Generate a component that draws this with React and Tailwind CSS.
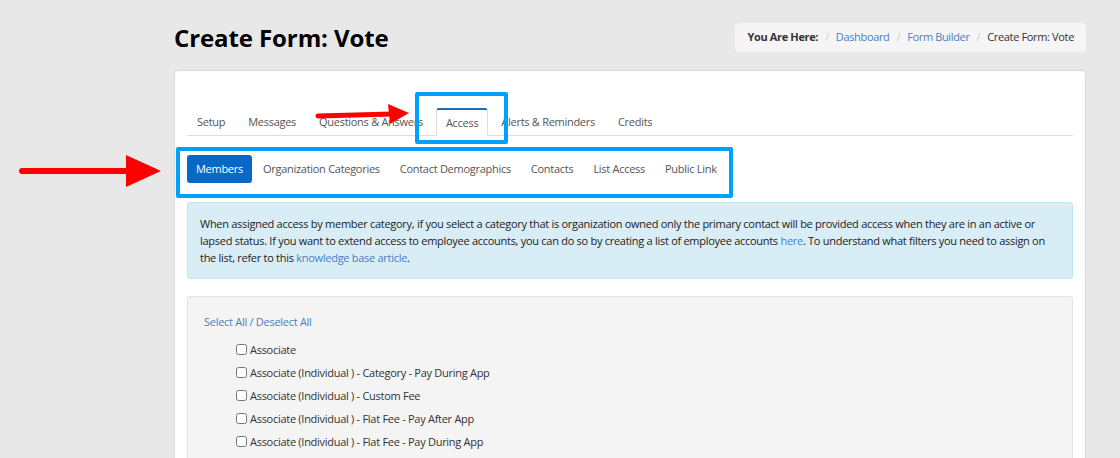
import { useState } from "react";

const tabs = ["Setup", "Messages", "Questions & Answers", "Access", "Alerts & Reminders", "Credits"];
const pills = ["Members", "Organization Categories", "Contact Demographics", "Contacts", "List Access", "Public Link"];
const categories = [
	"Associate",
	"Associate (Individual ) - Category - Pay During App",
	"Associate (Individual ) - Custom Fee",
	"Associate (Individual ) - Flat Fee - Pay After App",
	"Associate (Individual ) - Flat Fee - Pay During App",
];

const App = () => {
	// 선택된 카테고리 체크 상태
	const [checked, setChecked] = useState({});

	return (
		<div
			className="relative h-[458px] w-full overflow-hidden bg-[#e8e8e8] text-[#333]"
			style={{ fontFamily: '"Open Sans", "Liberation Sans", sans-serif' }}
		>
			<div className="ml-[174px] w-[912px]">
				{/* 제목 + 브레드크럼 */}
				<div className="flex items-center justify-between pt-[23px]">
					<h1 className="text-[24px] font-bold leading-[29px] tracking-[-0.1px] text-black">Create Form: Vote</h1>
					<div className="flex h-[29px] items-center rounded-[4px] bg-[#f5f5f5] px-[12px] text-[11px] tracking-[-0.35px] text-[#333]">
						<span className="font-bold">You Are Here:</span>
						<span className="px-[7px] text-[#ccc]">/</span>
						<a href="#" className="text-[#4a7fc1]">Dashboard</a>
						<span className="px-[7px] text-[#ccc]">/</span>
						<a href="#" className="text-[#4a7fc1]">Form Builder</a>
						<span className="px-[7px] text-[#ccc]">/</span>
						<span>Create Form: Vote</span>
					</div>
				</div>

				{/* 메인 패널 */}
				<div className="mt-[18px] h-[400px] rounded-[4px] border border-[#d9d9d9] bg-white px-[12px] pt-[37px] text-[11px] tracking-[-0.28px]">
					<ul className="flex border-b border-[#ddd] text-[#555]">
						{tabs.map((t) =>
							t === "Access" ? (
								<li key={t} className="-mb-px mr-[3px] rounded-t-[3px] border border-b-white border-[#ddd] border-t-2 border-t-[#1a6ec7] bg-white px-[9px] pt-[1px] leading-[23px]">
									{t}
								</li>
							) : (
								<li key={t} className="mr-[3px] border border-transparent px-[9px] pt-[1px] leading-[24px]">
									{t}
								</li>
							)
						)}
					</ul>

					<ul className="mt-[19px] flex text-[#555]">
						{pills.map((p, i) => (
							<li
								key={p}
								className={
									i === 0
										? "mr-[2px] rounded-[3px] bg-[#0868c8] px-[9px] leading-[28px] text-white"
										: "mr-[2px] px-[9px] leading-[28px]"
								}
							>
								{p}
							</li>
						))}
					</ul>

					<div className="mt-[19px] rounded-[3px] border border-[#bce8f1] bg-[#d9edf7] px-[12px] py-[12px] leading-[17px] text-[#222]">
						When assigned access by member category, if you select a category that is organization owned only the primary contact will be provided access when they are in an active or lapsed status. If you want to extend access to employee accounts, you can do so by creating a list of employee accounts{" "}
						<a href="#" className="text-[#4a7fc1]">here</a>. To understand what filters you need to assign on the list, refer to this{" "}
						<a href="#" className="text-[#4a7fc1]">knowledge base article</a>.
					</div>

					<div className="mt-[17px] h-[200px] rounded-[3px] border border-[#e3e3e3] bg-[#f4f4f4] px-[16px] pt-[16px] leading-[17px]">
						<div className="text-[#4a7fc1]">
							<a href="#">Select All</a> / <a href="#">Deselect All</a>
						</div>
						<div className="mt-[8px] flex flex-col pl-[32px] text-[#333]">
							{categories.map((c) => (
								<label key={c} className="flex h-[23px] items-center gap-[2px]">
									<input
										type="checkbox"
										className="m-0 h-[11px] w-[11px]"
										checked={!!checked[c]}
										onChange={() => setChecked({ ...checked, [c]: !checked[c] })}
									/>
									<span className="ml-[1px]">{c}</span>
								</label>
							))}
						</div>
					</div>
				</div>
			</div>

			{/* 주석 강조 박스 */}
			<div className="absolute left-[415px] top-[92px] h-[52px] w-[93px] rounded-[2px] border-4 border-[#00a0ff]" />
			<div className="absolute left-[176px] top-[147px] h-[51px] w-[557px] rounded-[2px] border-4 border-[#00a0ff]" />

			{/* 빨간 화살표 */}
			<svg className="absolute left-0 top-0" width="1120" height="458">
				<line x1="318" y1="116" x2="392" y2="114" stroke="#f00" strokeWidth="5" strokeLinecap="round" />
				<polygon points="388,104 409,113 390,124" fill="#f00" />
				<line x1="22" y1="171" x2="130" y2="171" stroke="#f00" strokeWidth="6" strokeLinecap="round" />
				<polygon points="126,155 161,171 126,187" fill="#f00" />
			</svg>
		</div>
	);
};

export default App;
